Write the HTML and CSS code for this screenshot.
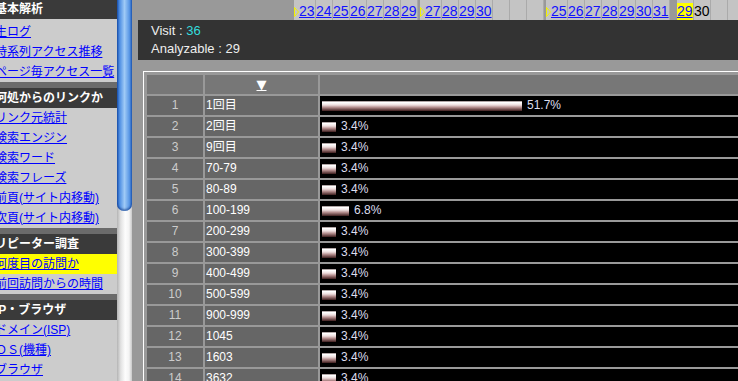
FILE: index.html
```html
<html lang="ja">

<head>
    <meta charset="UTF-8" />
    <meta name="viewport" content="width=device-width, initial-scale=1.0" />
    <title>Repeater</title>
    <link rel="stylesheet" href="styles.css">
</head>

<body>
    <div class="page">
        <div class="side">
            <div class="side_inner">
                <div class="side_head side_first">基本解析</div>
                <ul class="side_list side_list_first">
                    <li><a href="#">生ログ</a></li>
                    <li><a href="#">時系列アクセス推移</a></li>
                    <li><a href="#">ページ毎アクセス一覧</a></li>
                </ul>
                <div class="side_head">何処からのリンクか</div>
                <ul class="side_list">
                    <li><a href="#">リンク元統計</a></li>
                    <li><a href="#">検索エンジン</a></li>
                    <li><a href="#">検索ワード</a></li>
                    <li><a href="#">検索フレーズ</a></li>
                    <li><a href="#">前頁(サイト内移動)</a></li>
                    <li><a href="#">次頁(サイト内移動)</a></li>
                </ul>
                <div class="side_head">リピーター調査</div>
                <ul class="side_list">
                    <li class="side_active"><a href="#">何度目の訪問か</a></li>
                    <li><a href="#">前回訪問からの時間</a></li>
                </ul>
                <div class="side_head">IP・ブラウザ</div>
                <ul class="side_list">
                    <li><a href="#">ドメイン(ISP)</a></li>
                    <li><a href="#">ＯＳ(機種)</a></li>
                    <li><a href="#">ブラウザ</a></li>
                </ul>
            </div>
        </div>

        <div class="scroll">
            <div class="scroll_thumb"></div>
        </div>

        <div class="main">
            <div class="cal">
                <div class="cal_group">
                    <span class="cal_mark"><svg width="5" height="10" viewBox="0 0 5 10"><polygon points="0.5,0.5 4.5,5 0.5,9.5" fill="none" stroke="#f2f200" stroke-width="1" /></svg></span>
                    <span class="cal_day"><a href="#">23</a></span>
                    <span class="cal_day"><a href="#">24</a></span>
                    <span class="cal_day"><a href="#">25</a></span>
                    <span class="cal_day"><a href="#">26</a></span>
                    <span class="cal_day"><a href="#">27</a></span>
                    <span class="cal_day"><a href="#">28</a></span>
                    <span class="cal_day"><a href="#">29</a></span>
                </div>
                <div class="cal_group">
                    <span class="cal_mark"><svg width="5" height="10" viewBox="0 0 5 10"><polygon points="0.5,0.5 4.5,5 0.5,9.5" fill="none" stroke="#f2f200" stroke-width="1" /></svg></span>
                    <span class="cal_day"><a href="#">27</a></span>
                    <span class="cal_day"><a href="#">28</a></span>
                    <span class="cal_day"><a href="#">29</a></span>
                    <span class="cal_day"><a href="#">30</a></span>
                    <span class="cal_day"></span>
                    <span class="cal_day"></span>
                    <span class="cal_day"></span>
                </div>
                <div class="cal_group">
                    <span class="cal_mark"><svg width="5" height="10" viewBox="0 0 5 10"><polygon points="0.5,0.5 4.5,5 0.5,9.5" fill="none" stroke="#f2f200" stroke-width="1" /></svg></span>
                    <span class="cal_day"><a href="#">25</a></span>
                    <span class="cal_day"><a href="#">26</a></span>
                    <span class="cal_day"><a href="#">27</a></span>
                    <span class="cal_day"><a href="#">28</a></span>
                    <span class="cal_day"><a href="#">29</a></span>
                    <span class="cal_day"><a href="#">30</a></span>
                    <span class="cal_day"><a href="#">31</a></span>
                </div>
                <div class="cal_group">
                    <span class="cal_mark cal_mark_empty"></span>
                    <span class="cal_day cal_today"><a href="#">29</a></span>
                    <span class="cal_day">30</span>
                    <span class="cal_day"></span>
                    <span class="cal_day"></span>
                </div>
            </div>

            <div class="summary">
                <div>Visit : <span class="visit_num">36</span></div>
                <div>Analyzable : 29</div>
            </div>

            <div class="rank_wrap">
                <div class="rank">
                    <div class="rank_head"></div>
                    <div class="rank_head rank_sort"><a href="#">▼</a></div>
                    <div class="rank_head"></div>

                    <div class="rank_no">1</div>
                    <div class="rank_name">1回目</div>
                    <div class="rank_bar"><span class="bar" style="width: 200px"></span><span class="pct">51.7%</span></div>

                    <div class="rank_no">2</div>
                    <div class="rank_name">2回目</div>
                    <div class="rank_bar"><span class="bar" style="width: 14px"></span><span class="pct">3.4%</span></div>

                    <div class="rank_no">3</div>
                    <div class="rank_name">9回目</div>
                    <div class="rank_bar"><span class="bar" style="width: 14px"></span><span class="pct">3.4%</span></div>

                    <div class="rank_no">4</div>
                    <div class="rank_name">70-79</div>
                    <div class="rank_bar"><span class="bar" style="width: 14px"></span><span class="pct">3.4%</span></div>

                    <div class="rank_no">5</div>
                    <div class="rank_name">80-89</div>
                    <div class="rank_bar"><span class="bar" style="width: 14px"></span><span class="pct">3.4%</span></div>

                    <div class="rank_no">6</div>
                    <div class="rank_name">100-199</div>
                    <div class="rank_bar"><span class="bar" style="width: 27px"></span><span class="pct">6.8%</span></div>

                    <div class="rank_no">7</div>
                    <div class="rank_name">200-299</div>
                    <div class="rank_bar"><span class="bar" style="width: 14px"></span><span class="pct">3.4%</span></div>

                    <div class="rank_no">8</div>
                    <div class="rank_name">300-399</div>
                    <div class="rank_bar"><span class="bar" style="width: 14px"></span><span class="pct">3.4%</span></div>

                    <div class="rank_no">9</div>
                    <div class="rank_name">400-499</div>
                    <div class="rank_bar"><span class="bar" style="width: 14px"></span><span class="pct">3.4%</span></div>

                    <div class="rank_no">10</div>
                    <div class="rank_name">500-599</div>
                    <div class="rank_bar"><span class="bar" style="width: 14px"></span><span class="pct">3.4%</span></div>

                    <div class="rank_no">11</div>
                    <div class="rank_name">900-999</div>
                    <div class="rank_bar"><span class="bar" style="width: 14px"></span><span class="pct">3.4%</span></div>

                    <div class="rank_no">12</div>
                    <div class="rank_name">1045</div>
                    <div class="rank_bar"><span class="bar" style="width: 14px"></span><span class="pct">3.4%</span></div>

                    <div class="rank_no">13</div>
                    <div class="rank_name">1603</div>
                    <div class="rank_bar"><span class="bar" style="width: 14px"></span><span class="pct">3.4%</span></div>

                    <div class="rank_no">14</div>
                    <div class="rank_name">3632</div>
                    <div class="rank_bar"><span class="bar" style="width: 14px"></span><span class="pct">3.4%</span></div>
                </div>
            </div>
        </div>
    </div>
</body>

</html>
```

FILE: styles.css
```css
body {
    margin: 0;
    background: #999;
    font-family: "Liberation Sans", "Noto Sans CJK JP", sans-serif;
}

.page {
    display: flex;
    height: 381px;
    overflow: hidden;
}

/* left menu */
.side {
    width: 117px;
    flex-shrink: 0;
    background: #ccc;
    overflow: hidden;
}

.side_inner {
    margin-top: -1px;
    text-indent: -5px;
    font-size: 12px;
}

.side_head {
    height: 20px;
    line-height: 20px;
    background: #3a3a3a;
    border-top: 6px solid #6b6b6b;
    color: #fff;
    font-weight: bold;
    white-space: nowrap;
}

.side_head.side_first {
    border-top: none;
}

.side_list {
    list-style: none;
    margin: 0;
    padding: 0;
}

.side_list_first {
    padding-top: 3px;
}

.side_list li {
    height: 20px;
    line-height: 20px;
    white-space: nowrap;
}

.side_list a {
    color: #00f;
}

.side_list .side_active {
    background: #ff0;
}

/* scroll bar */
.scroll {
    width: 15px;
    flex-shrink: 0;
    background: linear-gradient(to right, #b4b4b4 0, #e2e2e2 25%, #fdfdfd 55%, #f4f4f4 80%, #c8c8c8 100%);
}

.scroll_thumb {
    height: 211px;
    border-radius: 0 0 7px 7px;
    background: linear-gradient(to right, #1d55b3 0, #4f8fe3 18%, #9fcaf6 50%, #5a98e6 82%, #2460bd 100%);
    box-shadow: inset 0 -2px 2px rgba(0, 40, 120, 0.5);
}

/* main */
.main {
    flex: 1;
    min-width: 0;
    overflow: hidden;
}

.cal {
    display: flex;
    height: 20px;
    padding-left: 160px;
    white-space: nowrap;
}

.cal_group {
    display: flex;
    margin-left: 2px;
}

.cal_mark {
    width: 5px;
    background: #c4c4c4;
    padding-top: 7px;
    box-sizing: border-box;
}

.cal_mark svg {
    display: block;
}

.cal_mark_empty {
    background: none;
}

.cal_day {
    width: 17px;
    flex-shrink: 0;
    box-sizing: border-box;
    border-right: 1px solid #aaa;
    background: #c4c4c4;
    padding-top: 3px;
    font-size: 14px;
    line-height: 17px;
    color: #000;
}

.cal_day a {
    display: block;
    color: #11f;
}

.cal_today a {
    background: #ff0;
}

.summary {
    margin-left: 6px;
    height: 40px;
    box-sizing: border-box;
    padding: 2px 0 0 13px;
    background: #333;
    color: #eee;
    font-size: 13px;
    line-height: 18px;
}

.visit_num {
    color: #3dd;
}

/* ranking table */
.rank_wrap {
    margin: 11px 0 0 11px;
    border-top: 1px solid #fff;
    border-left: 1px solid #fff;
    padding: 3px 0 0 3px;
}

.rank {
    display: grid;
    grid-template-columns: 56px 113px 1fr;
    grid-auto-rows: 19px;
    gap: 2px;
    font-size: 12px;
    line-height: 19px;
}

.rank_head {
    background: #777;
}

.rank_sort {
    text-align: center;
}

.rank_sort a {
    color: #fff;
    font-family: "DejaVu Sans", sans-serif;
    font-size: 13px;
}

.rank_no {
    background: #666;
    color: #ccc;
    text-align: center;
}

.rank_name {
    background: #666;
    color: #fff;
    padding-left: 1px;
}

.rank_bar {
    background: #000;
    display: flex;
    align-items: center;
    padding-left: 2px;
    white-space: nowrap;
}

.bar {
    height: 10px;
    flex-shrink: 0;
    background: linear-gradient(to bottom, #8a7a7a 0, #fff 15%, #eedede 40%, #b08a8a 65%, #3e1e1e 100%);
}

.pct {
    margin-left: 5px;
    color: #dde;
}
```
